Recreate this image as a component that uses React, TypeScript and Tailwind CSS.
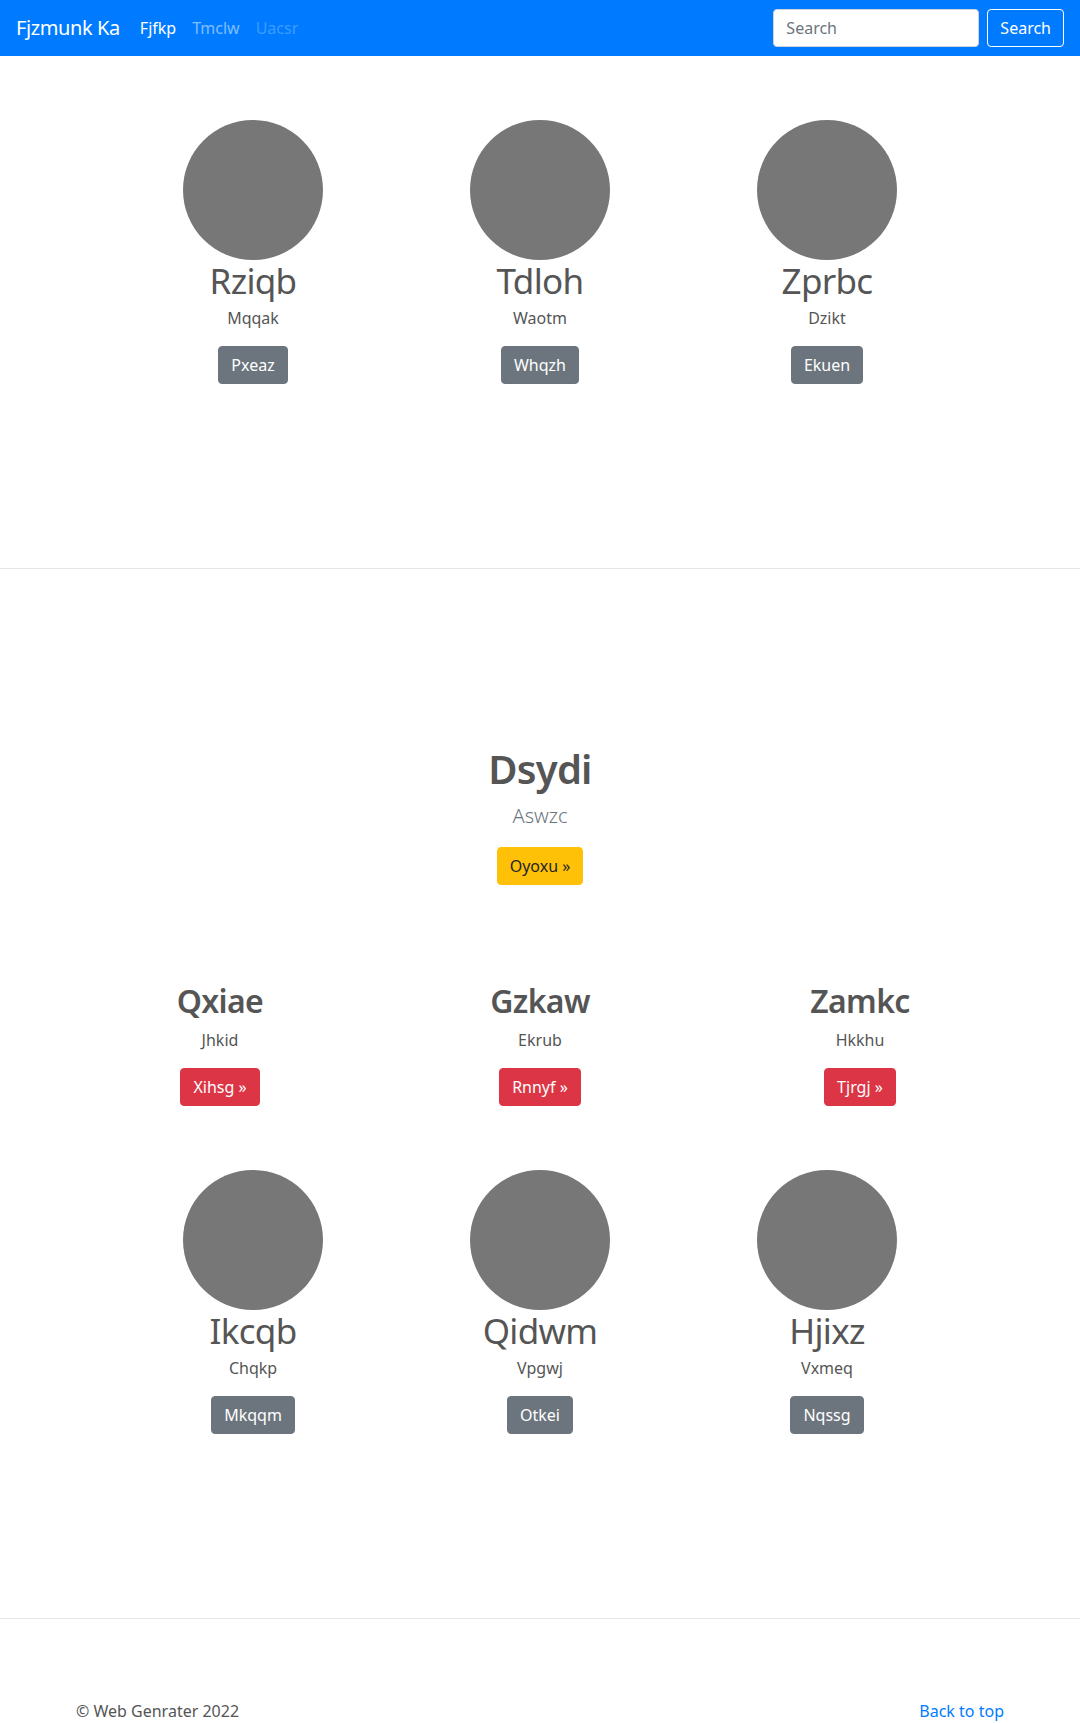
import React from 'react'

const topCards = [
  { title: 'Rziqb', sub: 'Mqqak', btn: 'Pxeaz' },
  { title: 'Tdloh', sub: 'Waotm', btn: 'Whqzh' },
  { title: 'Zprbc', sub: 'Dzikt', btn: 'Ekuen' },
]

const textCards = [
  { title: 'Qxiae', sub: 'Jhkid', btn: 'Xihsg' },
  { title: 'Gzkaw', sub: 'Ekrub', btn: 'Rnnyf' },
  { title: 'Zamkc', sub: 'Hkkhu', btn: 'Tjrgj' },
]

const bottomCards = [
  { title: 'Ikcqb', sub: 'Chqkp', btn: 'Mkqqm' },
  { title: 'Qidwm', sub: 'Vpgwj', btn: 'Otkei' },
  { title: 'Hjixz', sub: 'Vxmeq', btn: 'Nqssg' },
]

type Card = { title: string; sub: string; btn: string }

const CircleCard: React.FC<{ card: Card }> = ({ card }) => (
  <div className="flex flex-col items-center text-center">
    <div className="w-[140px] h-[140px] rounded-full bg-[#777777]" />
    <h2 className="text-[35px] leading-[42px] font-normal tracking-[-0.02em] text-[#555555]">{card.title}</h2>
    <p className="mt-1 text-base leading-6 text-[#555555]">{card.sub}</p>
    <button className="mt-4 px-3 py-[6px] text-base leading-6 text-white bg-[#6c757d] border border-[#6c757d] rounded">
      {card.btn}
    </button>
  </div>
)

export default function App() {
  return (
    <div className="bg-white min-h-[1723px] font-['Segoe_UI','Noto_Sans',sans-serif] text-[#212529]">
      {/* Navbar */}
      <nav className="h-14 bg-[#007bff] flex items-center px-4">
        <a className="text-xl text-white mr-3 leading-[30px] tracking-[-0.02em]">Fjzmunk Ka</a>
        <ul className="flex items-center">
          <li className="px-2 text-white">Fjfkp</li>
          <li className="px-2 text-white/50">Tmclw</li>
          <li className="px-2 text-white/25">Uacsr</li>
        </ul>
        <div className="ml-auto flex items-center gap-2">
          <input
            placeholder="Search"
            className="w-[206px] h-[38px] px-3 bg-white rounded border border-[#ced4da] text-base placeholder:text-[#6c757d] outline-none"
          />
          <button className="h-[38px] px-3 text-white border border-white rounded text-base">Search</button>
        </div>
      </nav>

      {/* Top cards */}
      <section className="pt-16 pb-[184px]">
        <div className="w-[861px] mx-auto grid grid-cols-3">
          {topCards.map((c) => (
            <CircleCard key={c.title} card={c} />
          ))}
        </div>
      </section>

      <hr className="border-t border-[#e5e5e5]" />

      {/* Feature */}
      <section className="pt-[176px] flex flex-col items-center text-center">
        <h1 className="text-[40px] leading-[48px] font-semibold tracking-[-0.02em] text-[#555555]">Dsydi</h1>
        <p className="mt-2 text-xl leading-[30px] font-light text-[#6c757d]">Aswzc</p>
        <button className="mt-4 px-3 py-[6px] text-base leading-6 text-[#212529] bg-[#ffc107] border border-[#ffc107] rounded">
          Oyoxu »
        </button>
      </section>

      <section className="mt-[97px] w-[960px] mx-auto grid grid-cols-3">
        {textCards.map((c) => (
          <div key={c.title} className="flex flex-col items-center text-center">
            <h2 className="text-[32px] leading-[38px] font-semibold tracking-[-0.02em] text-[#555555]">{c.title}</h2>
            <p className="mt-2 text-base leading-6 text-[#555555]">{c.sub}</p>
            <button className="mt-4 px-3 py-[6px] text-base leading-6 text-white bg-[#dc3545] border border-[#dc3545] rounded">
              {c.btn} »
            </button>
          </div>
        ))}
      </section>

      <section className="pt-16 pb-[184px]">
        <div className="w-[861px] mx-auto grid grid-cols-3">
          {bottomCards.map((c) => (
            <CircleCard key={c.title} card={c} />
          ))}
        </div>
      </section>

      <hr className="border-t border-[#e5e5e5]" />

      {/* Footer */}
      <footer className="pt-20 w-[960px] mx-auto px-4 flex justify-between text-base leading-6">
        <p className="text-[#555555]">© Web Genrater 2022</p>
        <a className="text-[#007bff]">Back to top</a>
      </footer>
    </div>
  )
}
